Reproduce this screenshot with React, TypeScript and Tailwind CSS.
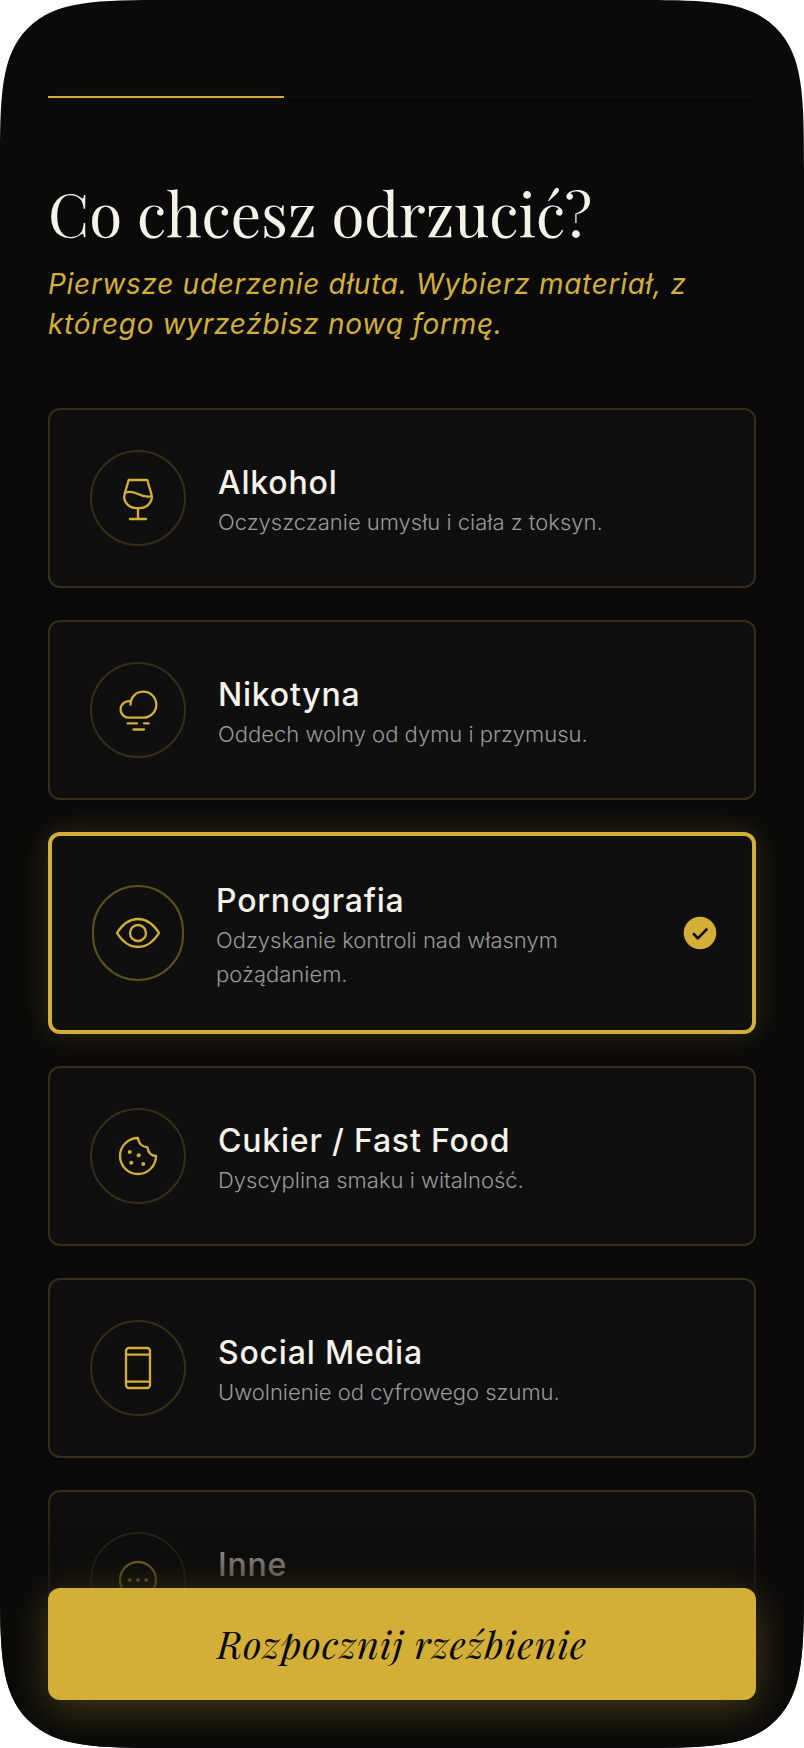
import { useState } from 'react'
import type { ReactNode } from 'react'

type Option = {
  id: string
  title: string
  description: string
  icon: ReactNode
}

const OPTIONS: Option[] = [
  {
    id: 'alcohol',
    title: 'Alkohol',
    description: 'Oczyszczanie umysłu i ciała z toksyn.',
    icon: (
      <>
        <path d="M14.7 6h18.6l4 13.6C39.6 28 33 34.3 24 34.3S8.4 28 10.7 19.6Z" />
        <path d="M11.6 18.6c4.4-1.6 8-.6 12.4 1.4 4 2 7.4 3.2 13 2.3M24 34.3V45M16 45h16" />
      </>
    ),
  },
  {
    id: 'nicotine',
    title: 'Nikotyna',
    description: 'Oddech wolny od dymu i przymusu.',
    icon: (
      <>
        <path d="M16.5 18.7C16.5 11 22 5.7 29.3 5.7a13 13 0 0 1 0 26H14.3a8.3 8.3 0 1 1 2.7-16.3" />
        <path d="M13.5 37.3H23M30 37.3h4.7M19.5 43.5H30" />
      </>
    ),
  },
  {
    id: 'porn',
    title: 'Pornografia',
    description: 'Odzyskanie kontroli nad własnym pożądaniem.',
    icon: (
      <>
        <path d="M3 24C8 16 15 10 24 10s16 6 21 14c-5 8-12 14-21 14S8 32 3 24Z" />
        <circle cx="24" cy="24" r="8" />
      </>
    ),
  },
  {
    id: 'sugar',
    title: 'Cukier / Fast Food',
    description: 'Dyscyplina smaku i witalność.',
    icon: (
      <>
        <path d="M24 6a18 18 0 1 0 18 18c-4.5-.3-7.800-3-8.500-8.700C28 14.7 24.5 11.5 24 6Z" />
        <Dots points={[[15.7, 20], [24.7, 23.3], [17.3, 30.7], [29.3, 32]]} />
      </>
    ),
  },
  {
    id: 'social',
    title: 'Social Media',
    description: 'Uwolnienie od cyfrowego szumu.',
    icon: (
      <>
        <rect x="12" y="4" width="24" height="40" rx="3" />
        <path d="M12 10.7h24M12 37.7h24" />
      </>
    ),
  },
  {
    id: 'other',
    title: 'Inne',
    description: 'Własny materiał do obróbki.',
    icon: (
      <>
        <circle cx="24" cy="24" r="18" />
        <Dots points={[[15.8, 24], [24, 24], [32.2, 24]]} />
      </>
    ),
  },
]

function Dots({ points }: { points: number[][] }) {
  return (
    <g fill="currentColor" stroke="none">
      {points.map(([x, y]) => (
        <circle key={`${x}-${y}`} cx={x} cy={y} r="2" />
      ))}
    </g>
  )
}

function CheckBadge() {
  return (
    <svg viewBox="0 0 40 40" className="-mr-2 h-10 w-10 shrink-0" aria-hidden="true">
      <circle cx="20" cy="20" r="16.3" fill="#d4af37" />
      <path
        d="m13.8 21 4 4.3 8.700-8.800"
        fill="none"
        stroke="#0f0f0f"
        strokeWidth="2.6"
        strokeLinecap="round"
        strokeLinejoin="round"
      />
    </svg>
  )
}

function OptionCard({
  option,
  selected,
  onSelect,
}: {
  option: Option
  selected: boolean
  onSelect: () => void
}) {
  return (
    <label
      className={`flex cursor-pointer items-center gap-8 rounded-xl bg-[#0f0f0f] px-10 ${
        selected
          ? 'border-4 border-[#d4af37] py-[39px] shadow-[0_0_30px_rgba(212,175,55,0.2)]'
          : 'border-2 border-[#d4af37]/20 py-10'
      }`}
    >
      <input type="radio" name="material" checked={selected} onChange={onSelect} className="sr-only" />
      <span
        className={`flex h-24 shrink-0 items-center justify-center rounded-full border-2 text-[#d4af37] ${
          selected ? 'w-[92px] border-[#d4af37]/40' : 'w-24 border-[#d4af37]/20'
        }`}
      >
        <svg
          viewBox="0 0 48 48"
          className="h-12 w-12 shrink-0"
          fill="none"
          stroke="currentColor"
          strokeWidth="2.3"
          strokeLinecap="round"
          strokeLinejoin="round"
          aria-hidden="true"
        >
          {option.icon}
        </svg>
      </span>
      <span className="min-w-0 flex-1 pt-1">
        <span className="block text-[32px] leading-11 font-medium tracking-wide text-[#f5f2e8]">
          {option.title}
        </span>
        <span className="block text-[22px] leading-[34px] font-light text-[#999999]">
          {option.description}
        </span>
      </span>
      {selected ? <CheckBadge /> : null}
    </label>
  )
}

export default function App() {
  const [selected, setSelected] = useState('porn')

  return (
    <div className="relative flex h-screen flex-col overflow-hidden rounded-[176px] bg-[#0a0a0a] font-['Inter','Liberation_Sans',sans-serif] [corner-shape:squircle]">
      <div className="shrink-0 px-12 pt-24">
        <div
          role="progressbar"
          aria-label="Postęp"
          aria-valuenow={1}
          aria-valuemax={3}
          className="h-[2px] bg-[#0f0f0f]"
        >
          <div className="h-full w-1/3 bg-[#d4af37] shadow-[0_0_20px_rgba(212,175,55,0.3)]" />
        </div>
      </div>

      <main className="min-h-0 flex-1 overflow-y-auto px-12 pt-20 pb-64 [scrollbar-width:none]">
        <h1 className="font-['Playfair_Display','Liberation_Serif',serif] text-[60px] leading-[68px] text-[#f5f2e8]">
          Co chcesz odrzucić?
        </h1>
        <p className="mt-[18px] text-[28px] leading-10 tracking-wide text-[#d4af37] italic">
          Pierwsze uderzenie dłuta. Wybierz materiał, z którego wyrzeźbisz nową formę.
        </p>

        <div role="radiogroup" aria-label="Co chcesz odrzucić?" className="mt-16 flex flex-col gap-8">
          {OPTIONS.map((option) => (
            <OptionCard
              key={option.id}
              option={option}
              selected={option.id === selected}
              onSelect={() => setSelected(option.id)}
            />
          ))}
        </div>
      </main>

      <footer className="absolute inset-x-0 bottom-0 bg-linear-to-t from-[#0a0a0a] via-[#0a0a0a] to-transparent px-12 pt-24 pb-12">
        <button
          type="button"
          className="h-28 w-full cursor-pointer rounded-xl bg-[#d4af37] pb-0.5 font-['Playfair_Display','Liberation_Serif',serif] text-[38px] tracking-wide text-[#0a0a0a] italic shadow-[0_8px_40px_rgba(212,175,55,0.3)]"
        >
          Rozpocznij rzeźbienie
        </button>
      </footer>
    </div>
  )
}
